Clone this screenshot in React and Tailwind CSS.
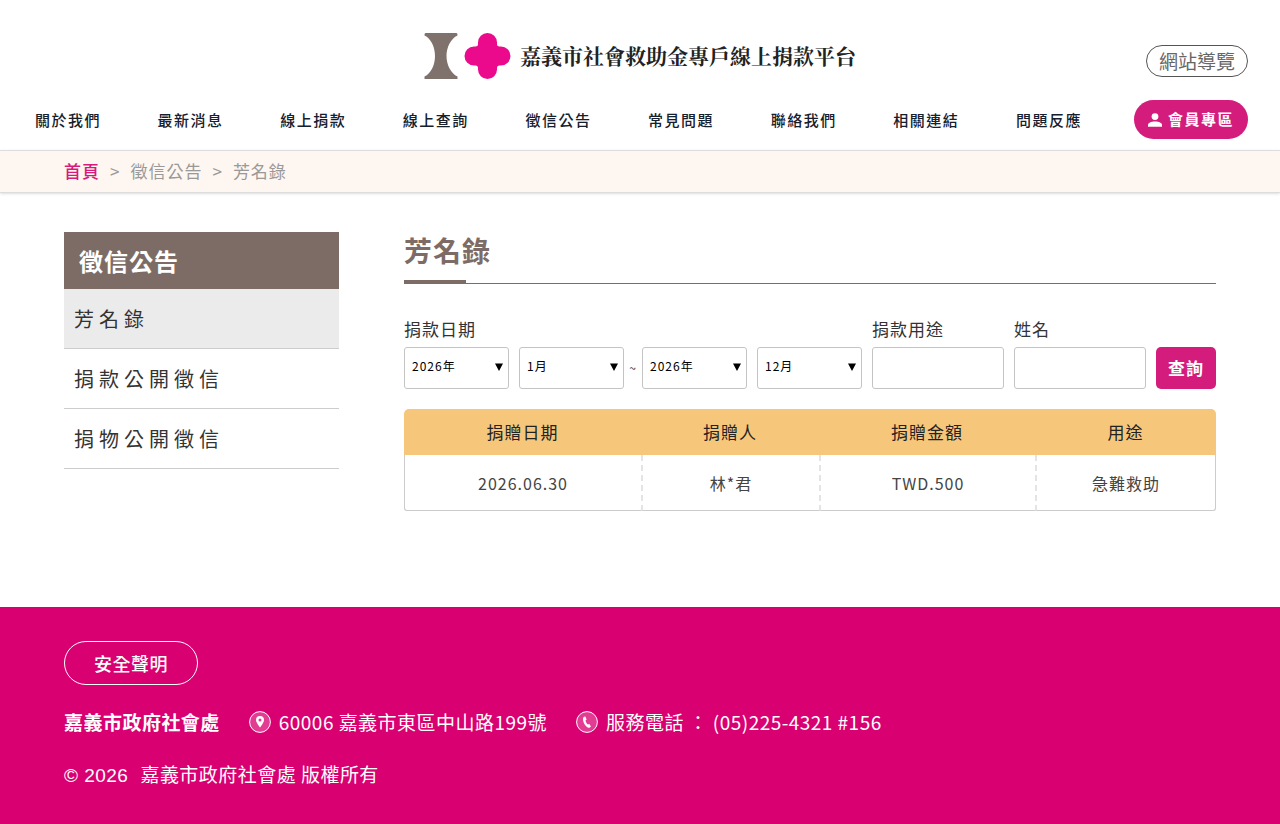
import React, { useState } from "react";

const navItems = [
  "關於我們",
  "最新消息",
  "線上捐款",
  "線上查詢",
  "徵信公告",
  "常見問題",
  "聯絡我們",
  "相關連結",
  "問題反應",
];

const sideItems = ["芳名錄", "捐款公開徵信", "捐物公開徵信"];

const records = [
  { date: "2026.06.30", donor: "林*君", amount: "TWD.500", purpose: "急難救助" },
];

const years = ["2024年", "2025年", "2026年"];
const months = Array.from({ length: 12 }, (_, i) => `${i + 1}月`);

function Logo() {
  return (
    <a href="#" className="flex items-center gap-2">
      <svg className="w-[88px] h-12" viewBox="0 0 88 48" aria-hidden="true">
        <path
          fill="#7f716b"
          d="M1.500 1h31q1.200 0 1 2.500C27 6.500 22.500 15 22.500 24s4.500 17.500 11 20.500v2.500H.5v-2.500C7 41.500 11 33 11 24S7 6.500.5 3.500Q.3 1 1.500 1z"
        />
        <path
          fill="#ec0a8c"
          d="M63.500 1a9.500 9.500 0 0 1 9.500 9.500V12q0 2.500 2.500 2.500H77a9.500 9.500 0 0 1 0 19h-1.500q-2.500 0-2.500 2.500v1.500a9.500 9.500 0 0 1-19 0V36q0-2.500-2.500-2.500H50a9.500 9.500 0 0 1 0-19h1.500Q54 14.500 54 12v-1.500A9.500 9.500 0 0 1 63.500 1z"
        />
      </svg>
      <span className="font-['Noto_Serif_CJK_TC','Noto_Sans_CJK_TC',serif] text-[21px] leading-[30px] pb-[2px] font-bold tracking-normal text-[#222]">
        嘉義市社會救助金專戶線上捐款平台
      </span>
    </a>
  );
}

function Header() {
  return (
    <header>
      <div className="grid grid-cols-[1fr_auto_1fr] px-8 pt-8 pb-5">
        <span></span>
        <Logo />
        <a
          href="#"
          className="justify-self-end mt-[13px] h-8 px-3 flex items-center rounded-full border border-[#555] text-[19px] tracking-normal text-[#666]"
        >
          網站導覽
        </a>
      </div>
      <div className="flex items-center gap-[52px] pl-[35px] pr-8 pb-[11px]">
        <nav className="flex-1">
          <ul className="flex justify-between">
            {navItems.map((item) => (
              <li key={item}>
                <a
                  href="#"
                  className="text-[15px] font-medium tracking-widest text-[#16202c] hover:text-[#d41c7c]"
                >
                  {item}
                </a>
              </li>
            ))}
          </ul>
        </nav>
        <a
          href="#"
          className="h-[39px] px-[14px] flex items-center gap-[6px] rounded-full bg-[#d41c7c] text-[15px] font-bold tracking-widest text-white"
        >
          <svg className="w-[14px] h-[14px]" viewBox="0 0 14 14" fill="currentColor" aria-hidden="true">
            <circle cx="7" cy="3.600" r="3.400" />
            <path d="M0 13.800v-1.600C0 9.800 3 8.600 7 8.600s7 1.200 7 3.600v1.600z" />
          </svg>
          會員專區
        </a>
      </div>
    </header>
  );
}

function Breadcrumb() {
  return (
    <nav className="flex items-center gap-[10px] h-[43px] px-16 pb-[2px] bg-[#fef6f0] border-y border-[#ddd] shadow-sm text-[17px] text-[#999]">
      <a href="#" className="font-medium text-[#d41c7c]">
        首頁
      </a>
      <span>&gt;</span>
      <a href="#">徵信公告</a>
      <span>&gt;</span>
      <span>芳名錄</span>
    </nav>
  );
}

function Sidebar() {
  return (
    <aside className="w-[275px] shrink-0">
      <h2 className="h-[57px] px-[15px] flex items-center bg-[#7d6c66] text-2xl font-bold text-white">
        徵信公告
      </h2>
      <ul>
        {sideItems.map((item, i) => (
          <li key={item} className="border-b border-[#ccc]">
            <a
              href="#"
              className={`block px-[10px] py-[14px] text-[20px] leading-[31px] tracking-[5px] text-[#333] ${
                i === 0 ? "bg-[#ebebeb]" : "hover:bg-[#ebebeb]"
              }`}
            >
              {item}
            </a>
          </li>
        ))}
      </ul>
    </aside>
  );
}

function Select({ label, value, options, onChange }) {
  return (
    <div className="relative w-[105px]">
      <select
        aria-label={label}
        value={value}
        onChange={(e) => onChange(e.target.value)}
        className="appearance-none w-full h-[42px] pl-[7px] pr-5 pb-1 rounded-[3px] border border-[#c4c4c4] bg-white text-[12px] text-black"
      >
        {options.map((option) => (
          <option key={option}>{option}</option>
        ))}
      </select>
      <svg
        className="absolute right-[6px] top-4 w-2 h-2 pointer-events-none"
        viewBox="0 0 8 8"
        aria-hidden="true"
      >
        <path d="M0 0.500h8L4 8z" />
      </svg>
    </div>
  );
}

function TextField({ id, label }) {
  return (
    <div className="flex-1 min-w-0">
      <label htmlFor={id} className="block pb-[2px] text-[17px] leading-8">
        {label}
      </label>
      <input
        id={id}
        type="text"
        className="block w-full h-[42px] px-2 rounded-[3px] border border-[#c4c4c4] bg-white text-sm"
      />
    </div>
  );
}

function SearchForm() {
  const [startYear, setStartYear] = useState("2026年");
  const [startMonth, setStartMonth] = useState("1月");
  const [endYear, setEndYear] = useState("2026年");
  const [endMonth, setEndMonth] = useState("12月");

  return (
    <form
      className="flex items-end gap-[10px] pt-[29px] pb-5 text-[#333]"
      onSubmit={(e) => e.preventDefault()}
    >
      <fieldset>
        <legend className="pb-[2px] text-[17px] leading-8">捐款日期</legend>
        <div className="flex items-center">
          <div className="flex gap-[10px]">
            <Select label="起始年" value={startYear} options={years} onChange={setStartYear} />
            <Select label="起始月" value={startMonth} options={months} onChange={setStartMonth} />
          </div>
          <span className="w-[18px] text-center text-xs">~</span>
          <div className="flex gap-[10px]">
            <Select label="結束年" value={endYear} options={years} onChange={setEndYear} />
            <Select label="結束月" value={endMonth} options={months} onChange={setEndMonth} />
          </div>
        </div>
      </fieldset>
      <TextField id="purpose" label="捐款用途" />
      <TextField id="name" label="姓名" />
      <button
        type="submit"
        className="w-[60px] h-[42px] rounded-[5px] bg-[#d41c7c] text-[17px] font-bold text-white cursor-pointer"
      >
        查詢
      </button>
    </form>
  );
}

function RecordTable() {
  return (
    <table className="w-full table-fixed border-separate border-spacing-0 text-center">
      <thead>
        <tr className="h-[46px] text-[17px] text-[#222]">
          <th className="w-[237px] rounded-tl-[5px] bg-[#f6c67a] font-normal">捐贈日期</th>
          <th className="w-[178px] bg-[#f6c67a] font-normal">捐贈人</th>
          <th className="bg-[#f6c67a] font-normal">捐贈金額</th>
          <th className="w-[181px] rounded-tr-[5px] bg-[#f6c67a] font-normal">用途</th>
        </tr>
      </thead>
      <tbody>
        {records.map((record) => (
          <tr key={record.date} className="h-14 text-[16px] text-[#444]">
            <td className="rounded-bl-[3px] border-l border-b border-[#ccc]">{record.date}</td>
            <td className="border-b border-[#ccc] border-l-2 [border-left-style:dashed] border-l-[#e4e4e4]">
              {record.donor}
            </td>
            <td className="border-b border-[#ccc] border-l-2 [border-left-style:dashed] border-l-[#e4e4e4]">
              {record.amount}
            </td>
            <td className="rounded-br-[3px] border-r border-b border-[#ccc] border-l-2 [border-left-style:dashed] border-l-[#e4e4e4]">
              {record.purpose}
            </td>
          </tr>
        ))}
      </tbody>
    </table>
  );
}

function Footer() {
  return (
    <footer className="flex-1 px-16 pt-[34px] pb-8 bg-[#d90072] text-[19px] leading-7 tracking-wide text-white">
      <a
        href="#"
        className="inline-flex items-center h-11 px-[29px] rounded-full border border-white text-[18px] font-medium"
      >
        安全聲明
      </a>
      <div className="flex flex-wrap items-center gap-x-[29px] mt-[23px]">
        <strong>嘉義市政府社會處</strong>
        <span className="flex items-center gap-2">
          <svg className="w-[22px] h-[22px]" viewBox="0 0 22 22" aria-hidden="true">
            <circle cx="11" cy="11" r="10.400" fill="#e23d92" stroke="#fff" />
            <path
              fill="#fff"
              fillRule="evenodd"
              d="M11 5a4 4 0 0 0-4 4c0 2.800 4 7.500 4 7.500s4-4.700 4-7.500a4 4 0 0 0-4-4zm0 2.500a1.500 1.500 0 1 1 0 3 1.500 1.500 0 0 1 0-3z"
            />
          </svg>
          60006 嘉義市東區中山路199號
        </span>
        <span className="flex items-center gap-2">
          <svg className="w-[22px] h-[22px]" viewBox="0 0 22 22" aria-hidden="true">
            <circle cx="11" cy="11" r="10.400" fill="#e23d92" stroke="#fff" />
            <path
              fill="#fff"
              d="M8.200 5.800l1.200-.4 1.200 3-1.100 1c.3 1.600 1.200 3 2.400 4l1.500-.4 1.500 2.600-1 .9c-1 .6-2.300.2-3.500-1C8 13.300 6.900 10.300 7 8c0-1 .4-1.800 1.200-2.200z"
            />
          </svg>
          服務電話 ： (05)225-4321 #156
        </span>
      </div>
      <p className="mt-6">
        <span className="font-['Liberation_Sans',sans-serif]">© 2026</span>
        <span className="ml-3">嘉義市政府社會處 版權所有</span>
      </p>
    </footer>
  );
}

export default function App() {
  return (
    <div className="min-h-screen flex flex-col bg-white font-['Noto_Sans_CJK_TC',sans-serif] tracking-[1px] text-[#333]">
      <Header />
      <Breadcrumb />
      <main className="flex gap-[65px] px-16 pt-[39px] pb-24">
        <Sidebar />
        <section className="flex-1 min-w-0">
          <h1 className="relative h-[52px] border-b border-[#7d6c66] text-[28px] leading-9 font-bold text-[#7d6c66] after:absolute after:left-0 after:bottom-0 after:w-[62px] after:h-[3px] after:bg-[#7d6c66]">
            芳名錄
          </h1>
          <SearchForm />
          <RecordTable />
        </section>
      </main>
      <Footer />
    </div>
  );
}
